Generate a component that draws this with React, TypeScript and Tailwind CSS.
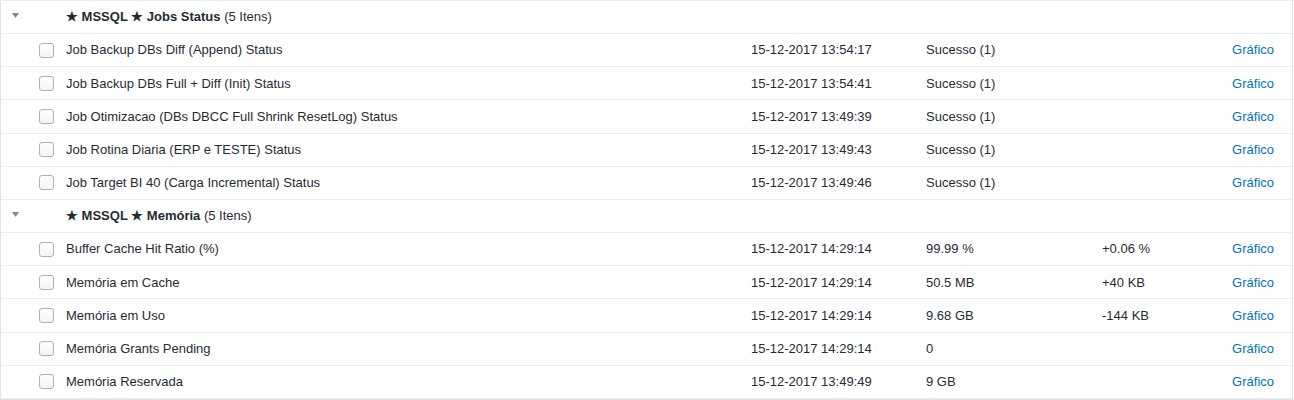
import React from "react";

type Item = { name: string; date: string; value: string; change?: string };

const groups: { title: string; items: Item[] }[] = [
  {
    title: "Jobs Status",
    items: [
      { name: "Job Backup DBs Diff (Append) Status", date: "15-12-2017 13:54:17", value: "Sucesso (1)" },
      { name: "Job Backup DBs Full + Diff (Init) Status", date: "15-12-2017 13:54:41", value: "Sucesso (1)" },
      { name: "Job Otimizacao (DBs DBCC Full Shrink ResetLog) Status", date: "15-12-2017 13:49:39", value: "Sucesso (1)" },
      { name: "Job Rotina Diaria (ERP e TESTE) Status", date: "15-12-2017 13:49:43", value: "Sucesso (1)" },
      { name: "Job Target BI 40 (Carga Incremental) Status", date: "15-12-2017 13:49:46", value: "Sucesso (1)" },
    ],
  },
  {
    title: "Memória",
    items: [
      { name: "Buffer Cache Hit Ratio (%)", date: "15-12-2017 14:29:14", value: "99.99 %", change: "+0.06 %" },
      { name: "Memória em Cache", date: "15-12-2017 14:29:14", value: "50.5 MB", change: "+40 KB" },
      { name: "Memória em Uso", date: "15-12-2017 14:29:14", value: "9.68 GB", change: "-144 KB" },
      { name: "Memória Grants Pending", date: "15-12-2017 14:29:14", value: "0" },
      { name: "Memória Reservada", date: "15-12-2017 13:49:49", value: "9 GB" },
    ],
  },
];

const rowCls = "flex items-center h-[33.17px] border-b border-[#ebeef0] box-border";

function Checkbox() {
  return (
    <span className="block w-[15px] h-[15px] rounded-[3px] border border-[#acb4b8] bg-gradient-to-b from-white to-[#f2f4f5]" />
  );
}

export default function App() {
  return (
    <div
      className="w-[1294px] bg-white text-[13px] text-[#1f2c33] border-t border-[#ebeef0]"
      style={{ fontFamily: '"Liberation Sans", Arial, sans-serif' }}
    >
      <div className="border-l border-r border-b border-[#dfe4e7] mr-[1px]">
        {groups.map((g) => (
          <div key={g.title}>
            {/* group header */}
            <div className={rowCls}>
              <div className="w-[65px] pl-[11px] pb-[3px] flex">
                <svg width="7" height="5" viewBox="0 0 7 5">
                  <path d="M0 0 L7 0 L3.5 5 Z" fill="#768d99" />
                </svg>
              </div>
              <div className="pb-[1px]">
                <span className="font-bold">★ MSSQL ★ {g.title}</span> (5 Itens)
              </div>
            </div>
            {g.items.map((it) => (
              <div key={it.name} className={rowCls}>
                <div className="w-[65px] pl-[38px]">
                  <Checkbox />
                </div>
                <div className="w-[685px]">{it.name}</div>
                <div className="w-[175px]">{it.date}</div>
                <div className="w-[176px]">{it.value}</div>
                <div className="flex-1">{it.change ?? ""}</div>
                <div className="pr-[18px] text-[#0275b8]">Gráfico</div>
              </div>
            ))}
          </div>
        ))}
      </div>
    </div>
  );
}
